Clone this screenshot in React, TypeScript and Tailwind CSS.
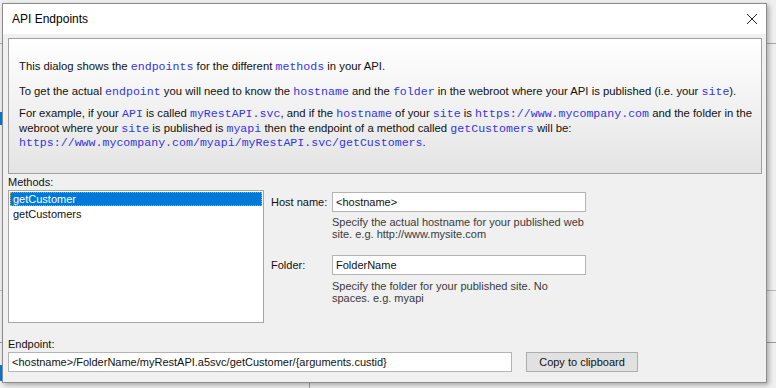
import React from 'react'

const Code = ({ children }: { children: React.ReactNode }) => (
  <span className="font-['Liberation_Mono','Courier_New',monospace] text-[11.6px] leading-[11px] text-[#3535e0]">{children}</span>
)

export default function App() {
  return (
    <div className="relative w-[776px] h-[388px] overflow-hidden bg-[#f0f0f0] font-['Liberation_Sans',Arial,sans-serif] text-[11px] text-[#111]">
      {/* desktop behind the dialog */}
      <div className="absolute left-0 top-[43px] h-px w-[776px] bg-[#a8a8a8]" />
      <div className="absolute left-0 top-[112px] h-[13px] w-[3px] bg-[#0078d7]" />
      <div className="absolute left-0 top-[365px] h-[16px] w-[3px] bg-[#0078d7]" />
      <div className="absolute left-0 top-[290px] h-px w-[776px] bg-[#b8b8b8]" />
      <div className="absolute left-0 top-[342px] h-px w-[776px] bg-[#9a9a9a]" />
      <div className="absolute left-[309px] top-[380px] h-[8px] w-px bg-[#a0a0a0]" />

      {/* dialog window */}
      <div className="absolute left-[2px] top-[3px] flex h-[380px] w-[765px] flex-col border border-[#8c8c8c] bg-[#f0f0f0] shadow-[2px_2px_5px_rgba(0,0,0,0.3)]">
        <div className="flex h-[30px] items-center justify-between bg-white pl-[9px] pr-[8px]">
          <span className="text-[12px] text-black">API Endpoints</span>
          <svg width="12" height="12" viewBox="0 0 12 12">
            <path d="M1 1 L11 11 M11 1 L1 11" stroke="#222" strokeWidth="1" />
          </svg>
        </div>

        <div className="flex flex-col pl-[5px] pr-[4px] pt-[4px]">
          {/* info panel */}
          <div className="h-[136px] border border-[#a0a0a0] bg-gradient-to-b from-white to-[#e4e4e4] pl-[10px] pr-[6px] pt-[20px] text-[11.3px] leading-[14.5px]">
            <p>
              This dialog shows the <Code>endpoints</Code> for the different <Code>methods</Code> in your API.
            </p>
            <p className="mt-[10px]">
              To get the actual <Code>endpoint</Code> you will need to know the <Code>hostname</Code> and the{' '}
              <Code>folder</Code> in the webroot where your API is published (i.e. your <Code>site</Code>).
            </p>
            <p className="mt-[8px]">
              For example, if your <Code>API</Code> is called <Code>myRestAPI.svc</Code>, and if the{' '}
              <Code>hostname</Code> of your <Code>site</Code> is <Code>https://www.mycompany.com</Code> and the folder in the
              webroot where your <Code>site</Code> is published is <Code>myapi</Code> then the endpoint of a method called{' '}
              <Code>getCustomers</Code> will be:
              <br />
              <Code>https://www.mycompany.com/myapi/myRestAPI.svc/getCustomers</Code>.
            </p>
          </div>

          <div className="flex">
            {/* methods list */}
            <div className="flex w-[256px] flex-col">
              <div className="mt-[2px] h-[13px] leading-[13px]">Methods:</div>
              <div className="mt-px h-[133px] border border-[#a6a6a6] bg-white p-px leading-[12px]">
                <div className="border border-dotted border-[#d9a441] bg-[#0078d7] pl-[2px] text-white">getCustomer</div>
                <div className="pl-[3px] pt-[2px]">getCustomers</div>
              </div>
            </div>

            {/* host and folder */}
            <div className="ml-[7px] flex flex-col pt-[18px]">
              <div className="flex items-start">
                <div className="w-[61px] whitespace-nowrap pt-[3px] leading-[14px]">Host name:</div>
                <div className="flex h-[20px] w-[254px] items-center border border-[#b4b4b4] bg-white pl-[3px]">&lt;hostname&gt;</div>
              </div>
              <div className="ml-[61px] mt-[4px] w-[254px] leading-[12px] text-[#3a3a3a]">
                Specify the actual hostname for your published web site. e.g. http://www.mysite.com
              </div>
              <div className="mt-[15px] flex items-start">
                <div className="w-[61px] pt-[3px] leading-[14px]">Folder:</div>
                <div className="flex h-[20px] w-[254px] items-center border border-[#b4b4b4] bg-white pl-[3px]">FolderName</div>
              </div>
              <div className="ml-[61px] mt-[5px] w-[230px] leading-[12px] text-[#3a3a3a]">
                Specify the folder for your published site. No spaces. e.g. myapi
              </div>
            </div>
          </div>

          {/* endpoint */}
          <div className="mt-[15px] h-[13px] leading-[13px]">Endpoint:</div>
          <div className="mt-px flex items-center">
            <div className="flex h-[20px] w-[504px] items-center border border-[#b4b4b4] bg-white pl-[3px]">
              &lt;hostname&gt;/FolderName/myRestAPI.a5svc/getCustomer/{'{arguments.custid}'}
            </div>
            <button className="ml-[14px] h-[20px] w-[112px] border border-[#adadad] bg-[#e1e1e1] text-[11px]">
              Copy to clipboard
            </button>
          </div>
        </div>
      </div>
    </div>
  )
}
